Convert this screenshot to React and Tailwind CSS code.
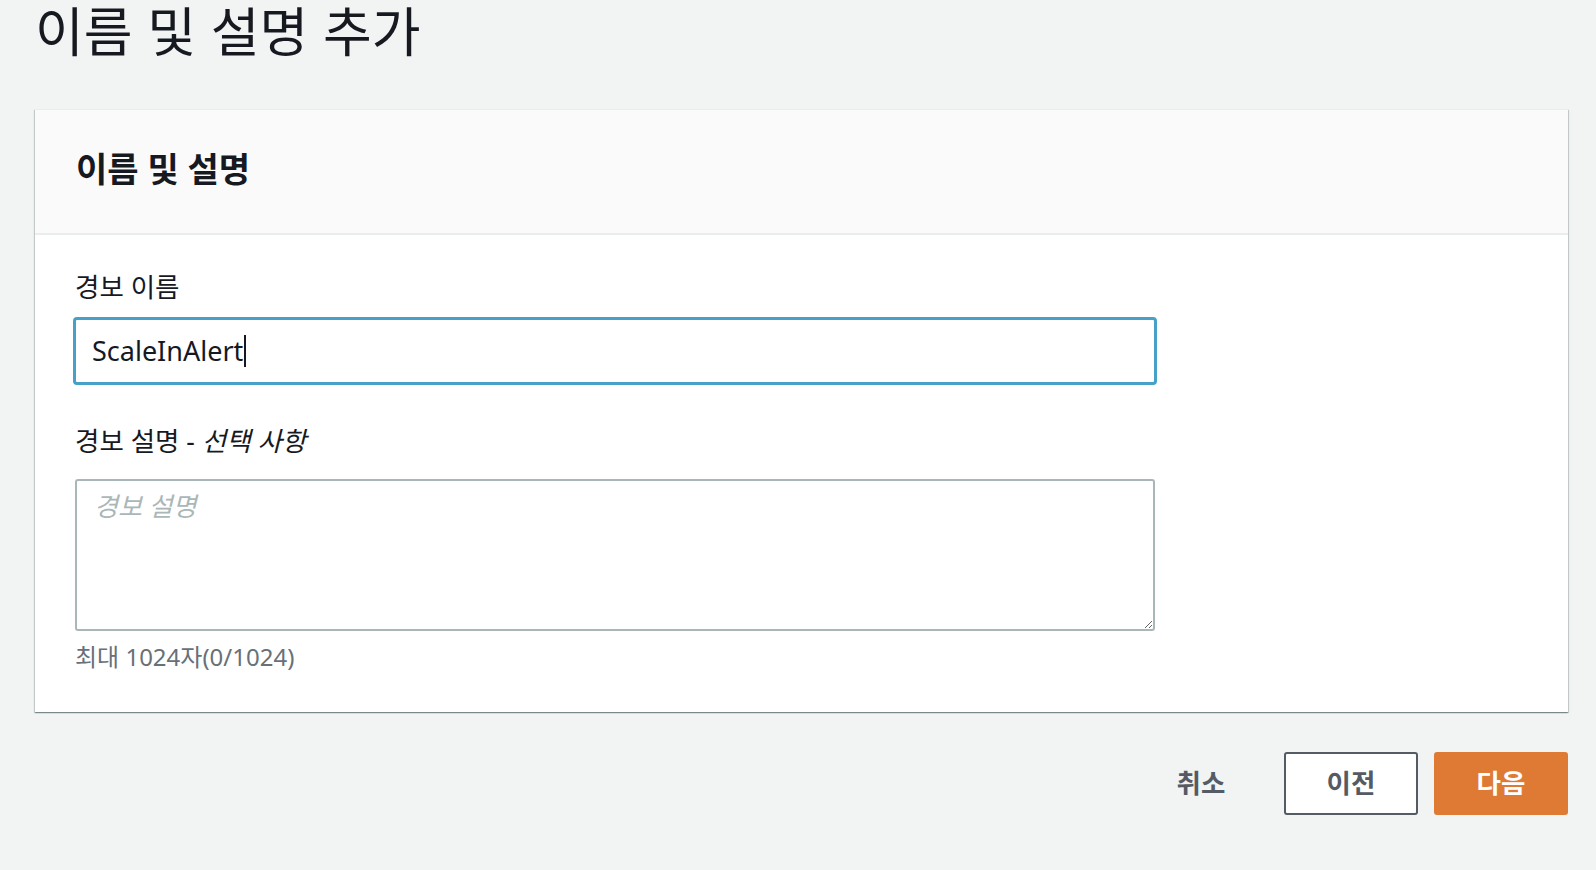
const font = { fontFamily: '"Noto Sans", "Noto Sans CJK KR", sans-serif' };
const titleFont = { fontFamily: '"Liberation Sans", "Noto Sans CJK KR", sans-serif' };

function Field({ label, optional, children, hint }) {
  return (
    <div className="flex flex-col">
      <label className="text-[26.5px] leading-[35px] text-[#16191f]">
        {label}
        {optional && (
          <>
            {" - "}
            <i>{optional}</i>
          </>
        )}
      </label>
      {children}
      {hint && <p className="mt-[9px] text-[24px] leading-[34px] text-[#687078]">{hint}</p>}
    </div>
  );
}

export default function App() {
  return (
    <div className="min-h-[870px] bg-[#f2f3f3] pl-[35px] pr-[28px] pt-[4px]" style={font}>
      <h1 className="text-[53px] leading-[60px] font-normal text-[#16191f]" style={titleFont}>
        이름 및 설명 추가
      </h1>

      <section className="mt-[45px] border-t border-[#eaeded] bg-white shadow-[0_1px_1px_0_rgba(0,28,36,0.3),1px_1px_1px_0_rgba(0,28,36,0.15),-1px_1px_1px_0_rgba(0,28,36,0.15)]">
        <div className="border-b-2 border-[#eaeded] bg-[#fafafa] px-[41px] pt-[37px] pb-[42px]">
          <h2 className="text-[34px] leading-[44px] font-bold text-[#16191f]">이름 및 설명</h2>
        </div>

        <div className="px-[40px] pt-[35px] pb-[38px]">
          <div className="w-[1080px]">
            <Field label="경보 이름">
              <div className="-mx-[2px] mt-[12px] flex h-[68px] items-center rounded-[4px] border-[3px] border-[#46a0c7] bg-white pl-[16px] text-[27px] text-[#16191f]">
                ScaleInAlert
                <span className="ml-[1px] inline-block h-[32px] w-[2px] bg-[#16191f]" />
              </div>
            </Field>

            <div className="mt-[39px]">
              <Field label="경보 설명" optional="선택 사항" hint="최대 1024자(0/1024)">
                <textarea
                  placeholder="경보 설명"
                  className="mt-[20px] block h-[152px] w-full rounded-[3px] border-2 border-[#aab7b8] bg-white px-[17px] pt-[8px] text-[26px] leading-[35px] text-[#16191f] outline-none placeholder:italic placeholder:text-[#aab7b8]"
                  style={font}
                />
              </Field>
            </div>
          </div>
        </div>
      </section>

      <div className="mt-[40px] flex justify-end gap-4">
        <button className="flex h-[63px] w-[134px] items-center justify-center text-[26.5px] font-bold text-[#545b64]">
          취소
        </button>
        <button className="flex h-[63px] w-[134px] items-center justify-center rounded-[3px] border-2 border-[#545b64] bg-white text-[26.5px] font-bold text-[#545b64]">
          이전
        </button>
        <button className="flex h-[63px] w-[134px] items-center justify-center rounded-[3px] bg-[#df7a34] text-[26.5px] font-bold text-white">
          다음
        </button>
      </div>
    </div>
  );
}
